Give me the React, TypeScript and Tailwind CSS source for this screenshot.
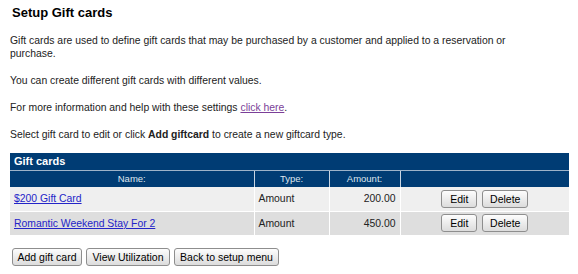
import React from "react";

const cards = [
  { id: 1, name: "$200 Gift Card", type: "Amount", amount: "200.00" },
  { id: 2, name: "Romantic Weekend Stay For 2", type: "Amount", amount: "450.00" },
];

const btn =
  "h-[18px] whitespace-nowrap rounded-[3px] border border-[#8e8e8e] bg-[linear-gradient(to_bottom,#fdfdfd,#dcdcdc)] px-0 text-[10.5px] leading-none text-black";

export default function App() {
  return (
    <main className="min-h-screen bg-white px-[10px] pt-[4px] font-['Liberation_Sans',Arial,sans-serif] text-[10.4px] leading-[13px] text-[#222]">
      <h1 className="pl-[2px] text-[13px] font-bold leading-[18px] text-black">
        Setup Gift cards
      </h1>

      <div className="mt-[12px] max-w-[540px] space-y-[14px]">
        <p>
          Gift cards are used to define gift cards that may be purchased by a
          customer and applied to a reservation or purchase.
        </p>
        <p>You can create different gift cards with different values.</p>
        <p>
          For more information and help with these settings{" "}
          <a href="#" className="text-[#7b3f98] underline">
            click here
          </a>
          .
        </p>
        <p>
          Select gift card to edit or click <b>Add giftcard</b> to create a new
          giftcard type.
        </p>
      </div>

      <table className="mt-[12px] w-[559px] border-collapse text-[10.4px]">
        <thead>
          <tr>
            <th
              colSpan={4}
              className="h-[17px] border-b border-[#9db3c9] bg-[#003c74] px-[4px] text-left text-[11px] font-bold text-white"
            >
              Gift cards
            </th>
          </tr>
          <tr className="h-[17px] bg-[#003c74] text-[9.5px] text-[#dfe6ee]">
            <th className="w-[244px] border-r border-[#c9d5e2] font-normal">Name:</th>
            <th className="w-[75px] border-r border-[#c9d5e2] font-normal">Type:</th>
            <th className="w-[71px] border-r border-[#c9d5e2] font-normal">Amount:</th>
            <th className="font-normal"></th>
          </tr>
        </thead>
        <tbody>
          {cards.map((card, i) => (
            <tr
              key={card.id}
              className={`h-[24px] ${i % 2 === 0 ? "bg-[#efefef]" : "bg-[#dedede]"} ${
                i === 0 ? "border-b border-white" : ""
              }`}
            >
              <td className="border-r border-white px-[4px]">
                <a href="#" className="text-[#2424c8] underline">
                  {card.name}
                </a>
              </td>
              <td className="border-r border-white px-[4px]">{card.type}</td>
              <td className="border-r border-white px-[4px] text-right">
                {card.amount}
              </td>
              <td>
                <div className="flex justify-center gap-[5px]">
                  <button className={`${btn} w-[36px]`}>Edit</button>
                  <button className={`${btn} w-[46px]`}>Delete</button>
                </div>
              </td>
            </tr>
          ))}
        </tbody>
      </table>

      <div className="mt-[13px] flex gap-[4px] pl-[2px]">
        <button className={`${btn} w-[70px]`}>Add gift card</button>
        <button className={`${btn} w-[84px]`}>View Utilization</button>
        <button className={`${btn} w-[105px]`}>Back to setup menu</button>
      </div>
    </main>
  );
}
